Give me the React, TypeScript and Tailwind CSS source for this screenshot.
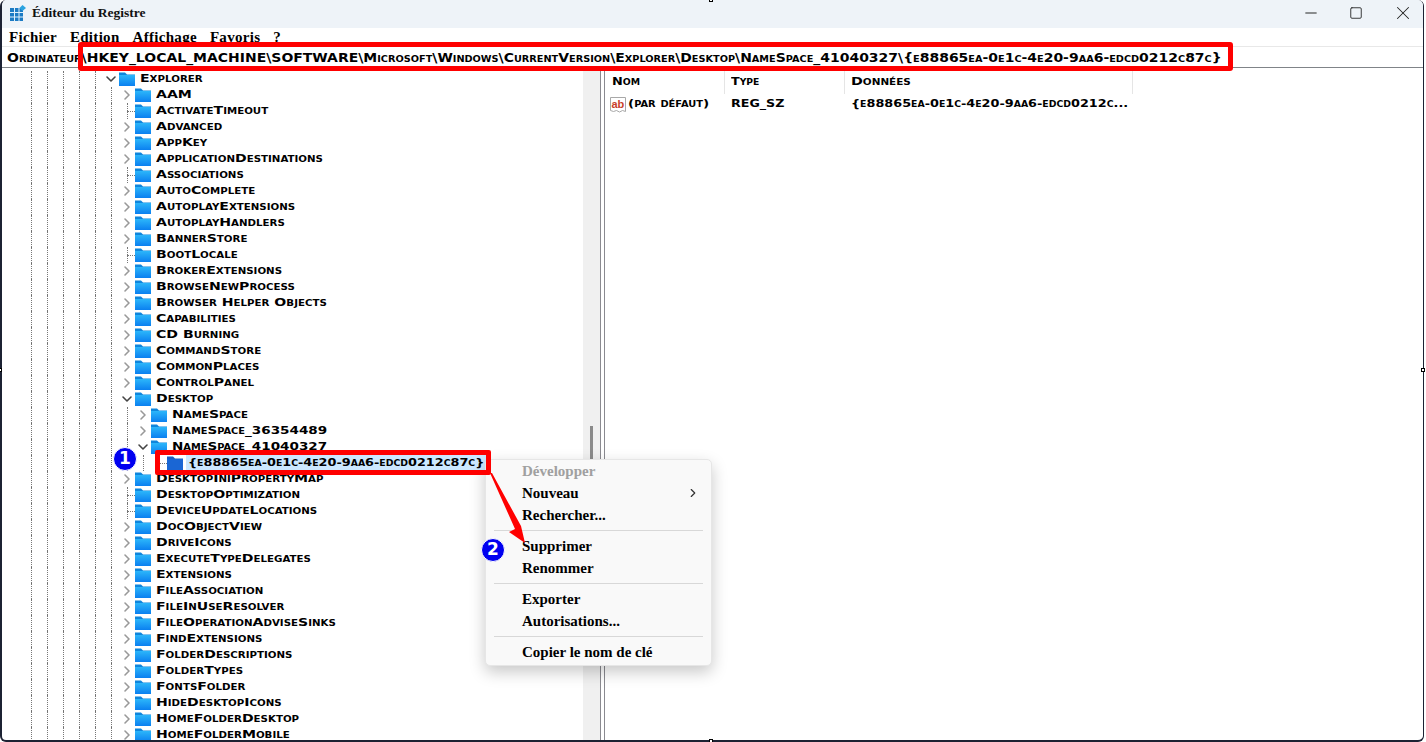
import { ChevronDown, ChevronRight, Minus, Square, X } from "lucide-react";

type Node = { name: string; depth: number; state?: "open" | "leaf" };

const nodes: Node[] = [
  { name: "Explorer", depth: 0, state: "open" },
  { name: "AAM", depth: 1 },
  { name: "ActivateTimeout", depth: 1, state: "leaf" },
  { name: "Advanced", depth: 1 },
  { name: "AppKey", depth: 1 },
  { name: "ApplicationDestinations", depth: 1 },
  { name: "Associations", depth: 1, state: "leaf" },
  { name: "AutoComplete", depth: 1 },
  { name: "AutoplayExtensions", depth: 1 },
  { name: "AutoplayHandlers", depth: 1 },
  { name: "BannerStore", depth: 1 },
  { name: "BootLocale", depth: 1, state: "leaf" },
  { name: "BrokerExtensions", depth: 1 },
  { name: "BrowseNewProcess", depth: 1 },
  { name: "Browser Helper Objects", depth: 1 },
  { name: "Capabilities", depth: 1 },
  { name: "CD Burning", depth: 1 },
  { name: "CommandStore", depth: 1 },
  { name: "CommonPlaces", depth: 1 },
  { name: "ControlPanel", depth: 1 },
  { name: "Desktop", depth: 1, state: "open" },
  { name: "NameSpace", depth: 2 },
  { name: "NameSpace_36354489", depth: 2 },
  { name: "NameSpace_41040327", depth: 2, state: "open" },
  { name: "{e88865ea-0e1c-4e20-9aa6-edcd0212c87c}", depth: 3, state: "leaf" },
  { name: "DesktopIniPropertyMap", depth: 1 },
  { name: "DesktopOptimization", depth: 1, state: "leaf" },
  { name: "DeviceUpdateLocations", depth: 1, state: "leaf" },
  { name: "DocObjectView", depth: 1 },
  { name: "DriveIcons", depth: 1 },
  { name: "ExecuteTypeDelegates", depth: 1 },
  { name: "Extensions", depth: 1 },
  { name: "FileAssociation", depth: 1 },
  { name: "FileInUseResolver", depth: 1 },
  { name: "FileOperationAdviseSinks", depth: 1 },
  { name: "FindExtensions", depth: 1 },
  { name: "FolderDescriptions", depth: 1 },
  { name: "FolderTypes", depth: 1 },
  { name: "FontsFolder", depth: 1 },
  { name: "HideDesktopIcons", depth: 1 },
  { name: "HomeFolderDesktop", depth: 1 },
  { name: "HomeFolderMobile", depth: 1 },
];

const capsFont = "font-['DejaVu_Sans',sans-serif] font-bold [font-variant:small-caps] text-black";
const menuFont = "font-['Liberation_Serif',serif] font-bold";

const Folder = ({ selected }: { selected?: boolean }) => (
  <svg width="16" height="16" viewBox="0 0 16 16" className="shrink-0">
    <defs>
      <linearGradient id="folderFill" x1="0" y1="0" x2="0" y2="1">
        <stop offset="0" stopColor="#2cb6fa" />
        <stop offset="1" stopColor="#0b80f0" />
      </linearGradient>
    </defs>
    <path d="M0 1.5h6l2 2h8v2H0z" fill={selected ? "#1d5fc0" : "#0f86dc"} />
    <rect x="0" y="4" width="16" height="11" fill={selected ? "#1a66d4" : "url(#folderFill)"} />
  </svg>
);

const Guide = () => (
  <span className="flex h-4 w-4 shrink-0 justify-center">
    <span className="h-full border-l border-dotted border-[#777]" />
  </span>
);

const Expander = ({ state }: { state?: Node["state"] }) => {
  if (state === "leaf") {
    return (
      <span className="relative flex h-4 w-4 shrink-0 justify-center">
        <span className="h-full border-l border-dotted border-[#777]" />
        <span className="absolute left-2 top-2 w-2 border-t border-dotted border-[#777]" />
      </span>
    );
  }
  return (
    <span className="flex h-4 w-4 shrink-0 items-center justify-center">
      {state === "open" ? (
        <ChevronDown size={16} strokeWidth={2.4} className="text-[#444]" />
      ) : (
        <ChevronRight size={16} strokeWidth={2.4} className="text-[#999]" />
      )}
    </span>
  );
};

const TreeRow = ({ node }: { node: Node }) => {
  const selected = node.name.startsWith("{");
  const hasDigits = node.name.startsWith("NameSpace_");
  const stretch = selected ? "scale-x-[1.165]" : hasDigits ? "scale-x-[1.23]" : "scale-x-[1.28]";
  return (
    <div className="flex h-4 shrink-0 items-center">
      {Array.from({ length: node.depth + 5 }).map((_, i) => (
        <Guide key={i} />
      ))}
      <Expander state={node.state} />
      <Folder selected={selected} />
      <span
        className={`ml-[3px] px-[2px] text-[11px] leading-4 ${capsFont} ${
          selected ? "w-[302px] bg-[#cce8ff]" : ""
        }`}
      >
        <span className={`inline-block origin-left whitespace-nowrap ${stretch}`}>{node.name}</span>
      </span>
    </div>
  );
};

const MenuItem = ({ label, disabled, arrow }: { label: string; disabled?: boolean; arrow?: boolean }) => (
  <div className={`flex h-[22px] items-center justify-between pl-[36px] pr-[11px] text-[15px] ${menuFont} ${disabled ? "text-[#a0a0a0]" : "text-black"}`}>
    <span>{label}</span>
    {arrow && <ChevronRight size={14} className="text-[#333]" />}
  </div>
);

const MenuSep = () => <div className="mx-2 my-[4px] h-px bg-[#d8d8d8]" />;

const Badge = ({ n, className }: { n: number; className: string }) => (
  <div className={`absolute flex h-6 w-6 items-center justify-center rounded-full border border-white bg-[#0000f0] font-['DejaVu_Sans',sans-serif] text-[17px] font-bold text-white ${className}`}>
    {n}
  </div>
);

export default function App() {
  return (
    <div className="relative h-[742px] w-[1426px] overflow-hidden bg-white">
      <div className="flex h-[742px] w-[1424px] flex-col overflow-hidden rounded-md border-b-2 border-l-2 border-r border-[#1c2233] bg-white">
        {/* title bar */}
        <div className="flex h-[28px] shrink-0 items-center bg-[#eef3f8] pl-[8px]">
          <svg width="16" height="16" viewBox="0 0 16 16" className="mb-[2px] shrink-0">
            <rect x="0" y="3" width="13" height="13" fill="#1c7bc4" />
            <path d="M4.5 3v13M9 3v13M0 7.5h13M0 12h13" stroke="#dff1fb" strokeWidth="1" />
            <path d="M12.5 0l3.5 3-3.5 3L9.5 3z" fill="#2aa3e0" />
          </svg>
          <span className={`mb-[1px] ml-[6px] text-[13.5px] text-[#111] ${menuFont}`}>Éditeur du Registre</span>
          <div className="mb-[3px] ml-auto flex items-center text-[#222]">
            <Minus size={18} strokeWidth={1.3} className="mr-[29px]" />
            <Square size={14} strokeWidth={1.5} className="mr-[29px]" />
            <X size={22} strokeWidth={1.1} className="mr-[9px]" />
          </div>
        </div>
        {/* menu bar */}
        <div className={`flex h-[18px] shrink-0 items-center gap-[13px] pl-[7px] text-[15px] tracking-[0.3px] text-black ${menuFont}`}>
          <span>Fichier</span>
          <span>Edition</span>
          <span>Affichage</span>
          <span>Favoris</span>
          <span>?</span>
        </div>
        {/* address bar */}
        <div className="flex h-[22px] shrink-0 items-center border-y-[1px] border-b-[#808488] border-t-[#e8e8e8] pl-[5px] pt-[3px]">
          <span className={`inline-block origin-left scale-x-[1.215] whitespace-nowrap text-[11.5px] ${capsFont}`}>
            Ordinateur\HKEY_LOCAL_MACHINE\SOFTWARE\Microsoft\Windows\CurrentVersion\Explorer\Desktop\NameSpace_41040327\{"{e88865ea-0e1c-4e20-9aa6-edcd0212c87c}"}
          </span>
        </div>
        {/* panes */}
        <div className="flex min-h-0 flex-1">
          <div className="flex w-[581px] shrink-0 flex-col overflow-hidden pl-[21px] pt-[3px]">
            {nodes.map((node) => (
              <TreeRow key={node.name} node={node} />
            ))}
          </div>
          <div className="flex w-[17px] shrink-0 justify-center bg-[#f0f0f0] pt-[358px]">
            <div className="h-[60px] w-[3px] bg-[#8a8a8a]" />
          </div>
          <div className="w-[5px] shrink-0 border-x border-[#8a8a90]" />
          <div className="flex min-w-0 flex-1 flex-col">
            <div className={`flex h-[28px] items-center text-[11px] ${capsFont}`}>
              <span className="flex h-[24px] w-[120px] items-center border-r border-[#e5e5e5] pl-[7px]">
                <span className="inline-block origin-left scale-x-[1.17]">Nom</span>
              </span>
              <span className="flex h-[24px] w-[120px] items-center border-r border-[#e5e5e5] pl-[6px]">
                <span className="inline-block origin-left scale-x-[1.15]">Type</span>
              </span>
              <span className="flex h-[24px] w-[288px] items-center border-r border-[#e5e5e5] pl-[6px]">
                <span className="inline-block origin-left scale-x-[1.3]">Données</span>
              </span>
            </div>
            <div className={`flex h-[17px] items-center text-[11px] ${capsFont}`}>
              <span className="flex w-[120px] items-center pl-[5px]">
                <svg width="16" height="16" viewBox="0 0 16 16" className="mr-[2px] shrink-0">
                  <path d="M0.5 0.5h15v14l-3-1-3 1.5-3-1.5-3 1-3-1z" fill="#fff" stroke="#a8a8a8" />
                  <text x="1.5" y="10.5" fontSize="11" fontWeight="700" fill="#c8402a" fontFamily="Liberation Sans" className="[font-variant:normal]">ab</text>
                </svg>
                <span className="inline-block origin-left scale-x-[1.23] whitespace-nowrap">(par défaut)</span>
              </span>
              <span className="w-[120px] pl-[6px]">
                <span className="inline-block origin-left scale-x-[1.15]">REG_SZ</span>
              </span>
              <span className="w-[288px] pl-[6px]">
                <span className="inline-block origin-left scale-x-[1.165] whitespace-nowrap">{"{e88865ea-0e1c-4e20-9aa6-edcd0212c..."}</span>
              </span>
            </div>
          </div>
        </div>
      </div>

      {/* context menu */}
      <div className="absolute left-[485px] top-[459px] h-[207px] w-[227px] rounded-[5px] border border-[#e6e6e6] bg-[#f9f9f9] shadow-[0_6px_16px_rgba(0,0,0,0.22)]">
        <MenuItem label="Développer" disabled />
        <MenuItem label="Nouveau" arrow />
        <MenuItem label="Rechercher..." />
        <MenuSep />
        <MenuItem label="Supprimer" />
        <MenuItem label="Renommer" />
        <MenuSep />
        <MenuItem label="Exporter" />
        <MenuItem label="Autorisations..." />
        <MenuSep />
        <MenuItem label="Copier le nom de clé" />
      </div>

      {/* annotations */}
      <div className="absolute left-[78px] top-[42px] h-[29px] w-[1155px] rounded-[3px] border-[5px] border-[#ff0000]" />
      <div className="absolute left-[155px] top-[450px] h-[25px] w-[336px] rounded-[2px] border-[5px] border-[#ff0000]" />
      <svg width="70" height="80" viewBox="0 0 70 80" className="absolute left-[480px] top-[470px]">
        <path d="M10 3 L12 3 L41 56 L45 73 L29 62 L35 59 Z" fill="#ff0000" />
      </svg>
      <Badge n={1} className="left-[113px] top-[447px]" />
      <Badge n={2} className="left-[481px] top-[538px]" />

      {/* selection handles */}
      <div className="absolute left-[709px] top-[-2px] h-1 w-1 border border-black bg-white" />
      <div className="absolute left-[-2px] top-[368px] h-1 w-1 border border-black bg-white" />
      <div className="absolute left-[1421px] top-[368px] h-1 w-1 border border-black bg-white" />
      <div className="absolute left-[709px] top-[739px] h-1 w-1 border border-black bg-white" />
    </div>
  );
}
